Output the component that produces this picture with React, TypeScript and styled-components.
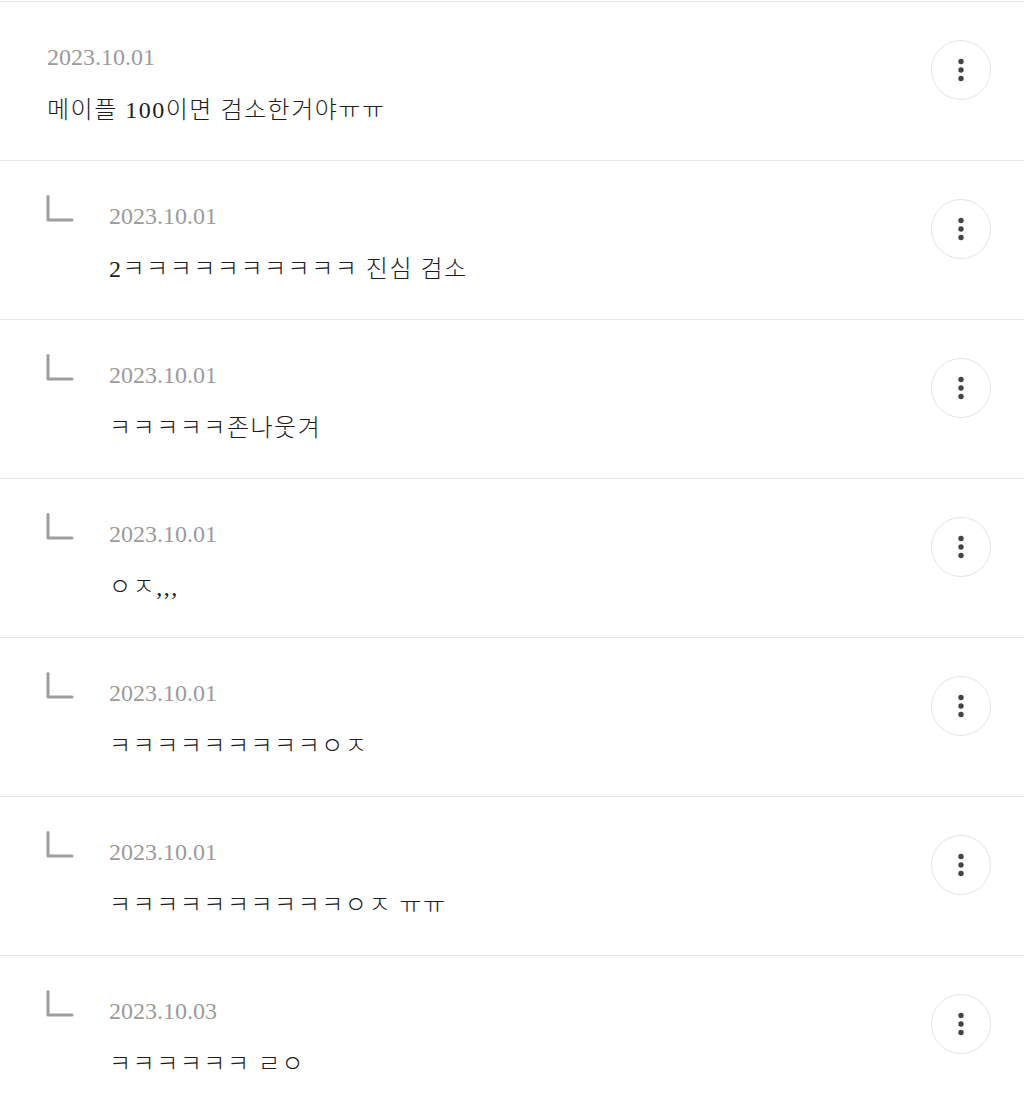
import React from "react";
import styled, { createGlobalStyle } from "styled-components";

const GlobalStyle = createGlobalStyle`
  html, body {
    margin: 0;
    padding: 0;
    background: #ffffff;
  }
  body {
    font-family: "Liberation Serif", "Noto Sans CJK KR", serif;
    color: #1a1a1a;
  }
`;

interface Comment {
  id: number;
  date: string;
  text: string;
  reply: boolean;
}

const comments: Comment[] = [
  { id: 1, date: "2023.10.01", text: "메이플 100이면 검소한거야ㅠㅠ", reply: false },
  { id: 2, date: "2023.10.01", text: "2ㅋㅋㅋㅋㅋㅋㅋㅋㅋㅋ 진심 검소", reply: true },
  { id: 3, date: "2023.10.01", text: "ㅋㅋㅋㅋㅋ존나웃겨", reply: true },
  { id: 4, date: "2023.10.01", text: "ㅇㅈ,,,", reply: true },
  { id: 5, date: "2023.10.01", text: "ㅋㅋㅋㅋㅋㅋㅋㅋㅋㅇㅈ", reply: true },
  { id: 6, date: "2023.10.01", text: "ㅋㅋㅋㅋㅋㅋㅋㅋㅋㅋㅇㅈ ㅠㅠ", reply: true },
  { id: 7, date: "2023.10.03", text: "ㅋㅋㅋㅋㅋㅋ ㄹㅇ", reply: true },
];

const List = styled.ul`
  list-style: none;
  margin: 0;
  padding: 1px 0 0;
`;

const Row = styled.li`
  display: flex;
  align-items: flex-start;
  border-top: 1px solid #e6e6e6;
  padding: 0 33px 0 46px;
  height: 158px;
  box-sizing: content-box;
`;

const ReplyMark = styled.svg`
  flex: 0 0 28px;
  width: 28px;
  height: 27px;
  margin: 34px 35px 0 0;
`;

const Body = styled.div<{ $reply: boolean }>`
  flex: 1;
  padding-top: 40px;
  padding-left: ${(p) => (p.$reply ? "0" : "1px")};
`;

const DateText = styled.div`
  font-size: 24px;
  line-height: 30px;
  color: #9b9b9b;
  font-weight: 300;
`;

const Content = styled.p`
  margin: 23px 0 0;
  font-size: 24px;
  line-height: 30px;
  color: #1e1e1e;
  font-weight: 300;
  letter-spacing: 1.5px;
`;

const MoreButton = styled.button`
  flex: 0 0 60px;
  width: 60px;
  height: 60px;
  margin-top: 38px;
  border-radius: 50%;
  border: 1px solid #e3e3e3;
  background: #ffffff;
  display: flex;
  align-items: center;
  justify-content: center;
  padding: 0;
  cursor: pointer;
`;

const DotsIcon = () => (
  <svg width="8" height="24" viewBox="0 0 8 24">
    <circle cx="4" cy="3.5" r="2.7" fill="#444" />
    <circle cx="4" cy="12" r="2.7" fill="#444" />
    <circle cx="4" cy="20.5" r="2.7" fill="#444" />
  </svg>
);

const ReplyIcon = () => (
  <ReplyMark viewBox="0 0 28 27">
    <path
      d="M2 1.5V25H26"
      fill="none"
      stroke="#9e9e9e"
      strokeWidth="3"
      strokeLinecap="round"
      strokeLinejoin="round"
    />
  </ReplyMark>
);

export default function App() {
  return (
    <>
      <GlobalStyle />
      <List>
        {comments.map((c) => (
          <Row key={c.id}>
            {c.reply && <ReplyIcon />}
            <Body $reply={c.reply}>
              <DateText>{c.date}</DateText>
              <Content>{c.text}</Content>
            </Body>
            <MoreButton aria-label="더보기">
              <DotsIcon />
            </MoreButton>
          </Row>
        ))}
      </List>
    </>
  );
}
